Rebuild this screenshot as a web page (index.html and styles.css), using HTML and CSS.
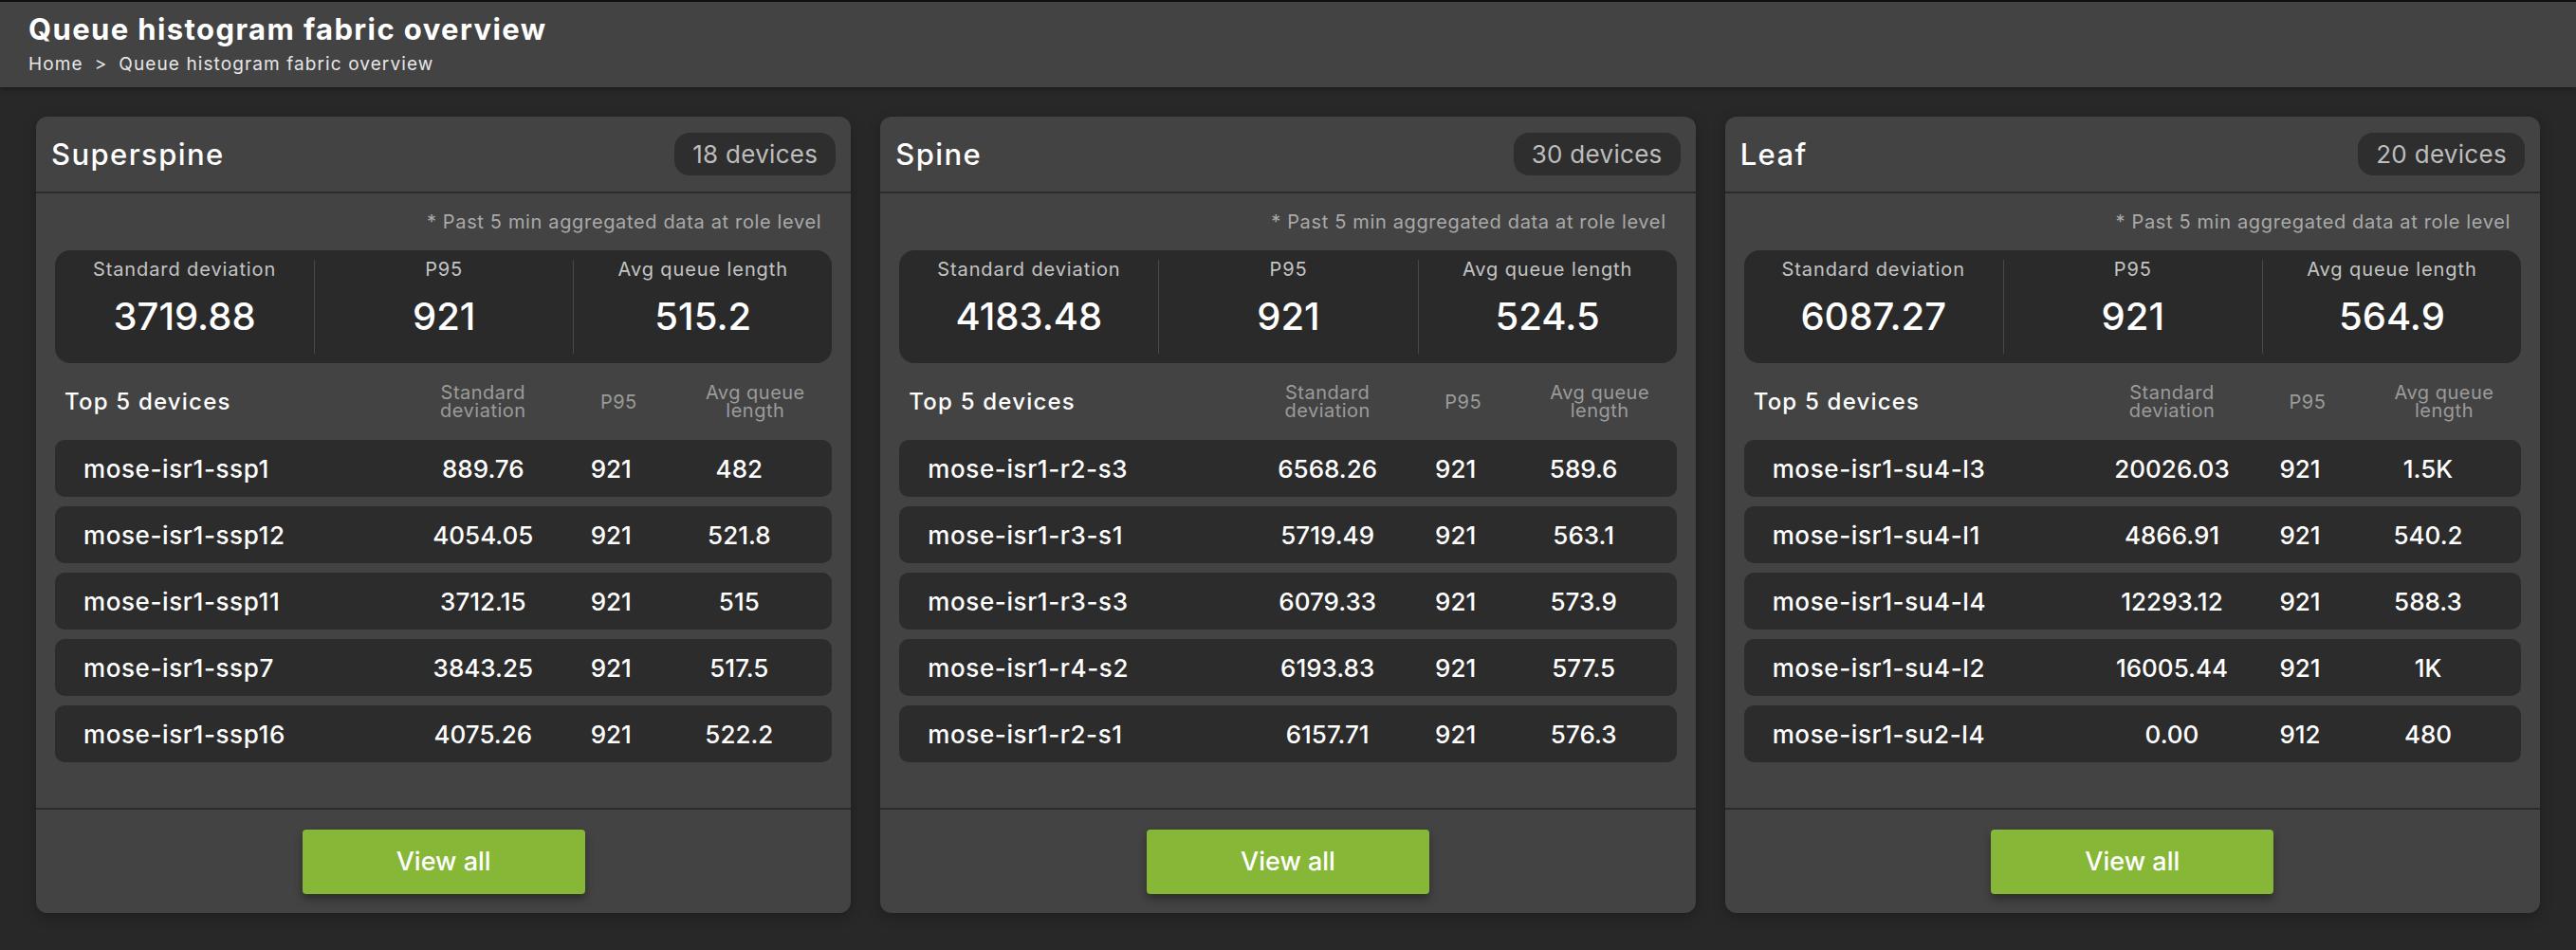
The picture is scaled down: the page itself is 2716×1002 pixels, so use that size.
FILE: index.html
```html
<!DOCTYPE html>
<html lang="en">
<head>
<meta charset="utf-8">
<title>Queue histogram fabric overview</title>
<link rel="stylesheet" href="styles.css">
</head>
<body>
<header class="page-header">
  <h1 class="page-title">Queue histogram fabric overview</h1>
  <nav class="crumbs"><span>Home</span><span class="sep">&gt;</span><span>Queue histogram fabric overview</span></nav>
</header>
<main class="cards">
  <section class="card">
    <div class="card-head"><h2 class="card-title">Superspine</h2><span class="badge">18 devices</span></div>
    <div class="card-body">
      <p class="note">* Past 5 min aggregated data at role level</p>
      <div class="stats">
        <div class="stat"><div class="stat-label">Standard deviation</div><div class="stat-value">3719.88</div></div>
        <div class="stat"><div class="stat-label">P95</div><div class="stat-value">921</div></div>
        <div class="stat"><div class="stat-label">Avg queue length</div><div class="stat-value">515.2</div></div>
      </div>
      <div class="thead"><div class="thead-title">Top 5 devices</div><div class="th">Standard<br>deviation</div><div class="th">P95</div><div class="th">Avg queue<br>length</div></div>
      <div class="rows">
        <div class="row"><span class="name">mose-isr1-ssp1</span><span class="num">889.76</span><span class="num">921</span><span class="num">482</span></div>
        <div class="row"><span class="name">mose-isr1-ssp12</span><span class="num">4054.05</span><span class="num">921</span><span class="num">521.8</span></div>
        <div class="row"><span class="name">mose-isr1-ssp11</span><span class="num">3712.15</span><span class="num">921</span><span class="num">515</span></div>
        <div class="row"><span class="name">mose-isr1-ssp7</span><span class="num">3843.25</span><span class="num">921</span><span class="num">517.5</span></div>
        <div class="row"><span class="name">mose-isr1-ssp16</span><span class="num">4075.26</span><span class="num">921</span><span class="num">522.2</span></div>
      </div>
    </div>
    <div class="card-foot"><button class="btn">View all</button></div>
  </section>
  <section class="card">
    <div class="card-head"><h2 class="card-title">Spine</h2><span class="badge">30 devices</span></div>
    <div class="card-body">
      <p class="note">* Past 5 min aggregated data at role level</p>
      <div class="stats">
        <div class="stat"><div class="stat-label">Standard deviation</div><div class="stat-value">4183.48</div></div>
        <div class="stat"><div class="stat-label">P95</div><div class="stat-value">921</div></div>
        <div class="stat"><div class="stat-label">Avg queue length</div><div class="stat-value">524.5</div></div>
      </div>
      <div class="thead"><div class="thead-title">Top 5 devices</div><div class="th">Standard<br>deviation</div><div class="th">P95</div><div class="th">Avg queue<br>length</div></div>
      <div class="rows">
        <div class="row"><span class="name">mose-isr1-r2-s3</span><span class="num">6568.26</span><span class="num">921</span><span class="num">589.6</span></div>
        <div class="row"><span class="name">mose-isr1-r3-s1</span><span class="num">5719.49</span><span class="num">921</span><span class="num">563.1</span></div>
        <div class="row"><span class="name">mose-isr1-r3-s3</span><span class="num">6079.33</span><span class="num">921</span><span class="num">573.9</span></div>
        <div class="row"><span class="name">mose-isr1-r4-s2</span><span class="num">6193.83</span><span class="num">921</span><span class="num">577.5</span></div>
        <div class="row"><span class="name">mose-isr1-r2-s1</span><span class="num">6157.71</span><span class="num">921</span><span class="num">576.3</span></div>
      </div>
    </div>
    <div class="card-foot"><button class="btn">View all</button></div>
  </section>
  <section class="card">
    <div class="card-head"><h2 class="card-title">Leaf</h2><span class="badge">20 devices</span></div>
    <div class="card-body">
      <p class="note">* Past 5 min aggregated data at role level</p>
      <div class="stats">
        <div class="stat"><div class="stat-label">Standard deviation</div><div class="stat-value">6087.27</div></div>
        <div class="stat"><div class="stat-label">P95</div><div class="stat-value">921</div></div>
        <div class="stat"><div class="stat-label">Avg queue length</div><div class="stat-value">564.9</div></div>
      </div>
      <div class="thead"><div class="thead-title">Top 5 devices</div><div class="th">Standard<br>deviation</div><div class="th">P95</div><div class="th">Avg queue<br>length</div></div>
      <div class="rows">
        <div class="row"><span class="name">mose-isr1-su4-l3</span><span class="num">20026.03</span><span class="num">921</span><span class="num">1.5K</span></div>
        <div class="row"><span class="name">mose-isr1-su4-l1</span><span class="num">4866.91</span><span class="num">921</span><span class="num">540.2</span></div>
        <div class="row"><span class="name">mose-isr1-su4-l4</span><span class="num">12293.12</span><span class="num">921</span><span class="num">588.3</span></div>
        <div class="row"><span class="name">mose-isr1-su4-l2</span><span class="num">16005.44</span><span class="num">921</span><span class="num">1K</span></div>
        <div class="row"><span class="name">mose-isr1-su2-l4</span><span class="num">0.00</span><span class="num">912</span><span class="num">480</span></div>
      </div>
    </div>
    <div class="card-foot"><button class="btn">View all</button></div>
  </section>
</main>
</body>
</html>
```
FILE: styles.css
```css
* { box-sizing: border-box; }
html, body { margin: 0; padding: 0; }
body {
  background: #282828;
  color: #ffffff;
  font-family: Inter, "Noto Sans", "DejaVu Sans", sans-serif;
  min-height: 1002px;
}
.page-header {
  background: #434343;
  border-top: 2px solid #0f0f0f;
  padding: 11px 30px 12px;
  height: 92px;
  box-shadow: 0 2px 6px rgba(0,0,0,0.35);
}
.page-title {
  margin: 0;
  font-size: 31px;
  line-height: 36px;
  font-weight: 700;
  letter-spacing: 1.4px;
}
.crumbs {
  margin-top: 8px;
  font-size: 19px;
  line-height: 22px;
  color: #e6e6e6;
  display: flex;
  gap: 12px;
  letter-spacing: 1.1px;
}
.cards {
  display: grid;
  grid-template-columns: repeat(3, 1fr);
  gap: 31px;
  padding: 31px 38px 0;
}
.card {
  background: #434343;
  border-radius: 12px;
  overflow: hidden;
  display: flex;
  flex-direction: column;
  box-shadow: 0 4px 14px rgba(0,0,0,0.25);
}
.card-head {
  height: 81px;
  padding: 0 16px;
  display: flex;
  align-items: center;
  justify-content: space-between;
  border-bottom: 2px solid #2b2b2b;
}
.card-title {
  margin: 0;
  font-size: 31px;
  line-height: 38px;
  font-weight: 500;
  letter-spacing: 1.4px;
}
.badge {
  height: 45px;
  padding: 0 19px;
  border-radius: 16px;
  background: #2e2e2e;
  color: #bdbdbd;
  font-size: 26px;
  line-height: 45px;
  letter-spacing: 0.3px;
}
.card-body {
  padding: 18px 0 48px;
  flex: 1;
}
.note {
  margin: 0 31px 18px 0;
  text-align: right;
  font-size: 20px;
  line-height: 24px;
  color: #a9a9a9;
  letter-spacing: 0.65px;
}
.stats {
  margin: 0 20px;
  height: 119px;
  padding: 10px 0;
  background: #2a2a2a;
  border-radius: 16px;
  display: grid;
  grid-template-columns: repeat(3, 1fr);
}
.stat {
  text-align: center;
}
.stat + .stat {
  border-left: 1px solid #484848;
}
.stat-label {
  font-size: 20px;
  line-height: 20px;
  color: #c4c4c4;
  letter-spacing: 0.9px;
}
.stat-value {
  margin-top: 16px;
  font-size: 40px;
  line-height: 48px;
  font-weight: 500;
}
.thead {
  margin: 22px 20px 21px;
  padding: 0 6px 0 10px;
  height: 38px;
  display: grid;
  grid-template-columns: 1fr 148px 138px 150px;
  align-items: center;
}
.thead-title {
  font-size: 24px;
  line-height: 30px;
  font-weight: 500;
  letter-spacing: 1.2px;
}
.th {
  text-align: center;
  font-size: 20px;
  line-height: 19px;
  color: #9b9b9b;
  letter-spacing: 0.5px;
}
.rows {
  margin: 0 20px;
  display: flex;
  flex-direction: column;
  gap: 10px;
}
.row {
  height: 60px;
  padding: 0 23px 0 30px;
  background: #2c2c2c;
  border-radius: 10px;
  display: grid;
  grid-template-columns: 1fr 150px 120px 150px;
  align-items: center;
  font-size: 26px;
  font-weight: 500;
}
.name { letter-spacing: 0.6px; }
.num { text-align: center; }
.card-foot {
  border-top: 2px solid #2b2b2b;
  height: 111px;
  display: flex;
  align-items: center;
  justify-content: center;
}
.btn {
  width: 298px;
  height: 68px;
  border: 0;
  border-radius: 4px;
  background: #86b737;
  color: #ffffff;
  font-family: inherit;
  font-size: 27px;
  font-weight: 500;
  box-shadow: 0 5px 10px rgba(0,0,0,0.35);
}
```
